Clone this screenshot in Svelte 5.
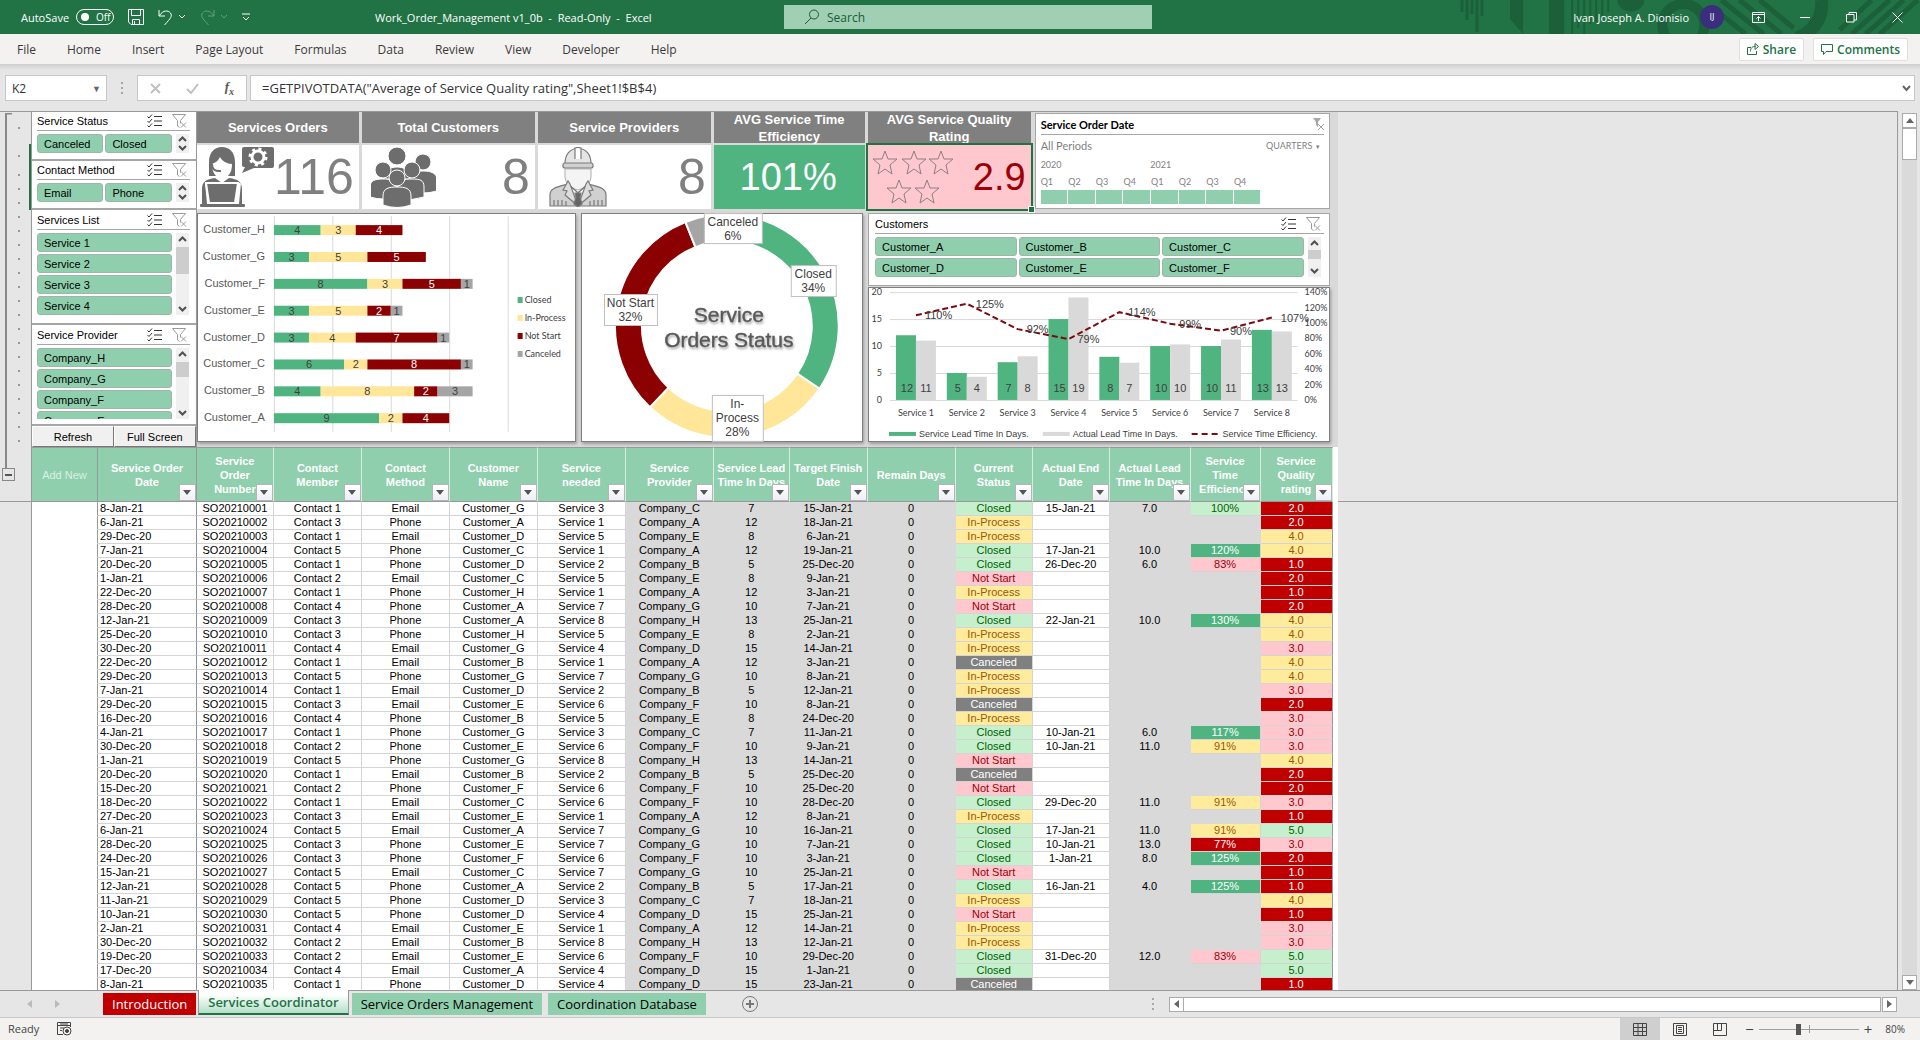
<script lang="ts">
	type Row = {
		id: string;
		date: string;
		contact: string;
		method: string;
		customer: string;
		service: string;
		provider: string;
		lead: number;
		target: string;
		status: string;
		end: string;
		actual: string;
		eff: string;
		rating: string;
	};

	const menus = ['File', 'Home', 'Insert', 'Page Layout', 'Formulas', 'Data', 'Review', 'View', 'Developer', 'Help'];

	let searchText = $state('');
	let cellRef = $state('K2');
	let formula = $state('=GETPIVOTDATA("Average of Service Quality rating",Sheet1!$B$4)');
	let autoSave = $state(false);
	let zoom = $state(80);

	const slicers = [
		{ title: 'Service Status', cls: 'two', items: ['Canceled', 'Closed'], thumb: 0 },
		{ title: 'Contact Method', cls: 'two', items: ['Email', 'Phone'], thumb: 0 },
		{ title: 'Services List', cls: 'list', items: ['Service 1', 'Service 2', 'Service 3', 'Service 4'], thumb: 27 },
		{ title: 'Service Provider', cls: 'cut', items: ['Company_H', 'Company_G', 'Company_F', 'Company_E'], thumb: 15 }
	];
	const customerSlicer = ['A', 'B', 'C', 'D', 'E', 'F'].map((c) => 'Customer_' + c);
	const quarters = ['Q1', 'Q2', 'Q3', 'Q4', 'Q1', 'Q2', 'Q3', 'Q4'];

	// Stacked bars: closed, in-process, not start, canceled
	const GREEN = '#50b480';
	const statusColors = [GREEN, '#ffe699', '#8b0000', '#a5a5a5'];
	const statusNames = ['Closed', 'In-Process', 'Not Start', 'Canceled'];
	const byCustomer: [string, number[]][] = [
		['H', [4, 3, 4, 0]],
		['G', [3, 5, 5, 0]],
		['F', [8, 3, 5, 1]],
		['E', [3, 5, 2, 1]],
		['D', [3, 4, 7, 1]],
		['C', [6, 2, 8, 1]],
		['B', [4, 8, 2, 3]],
		['A', [9, 2, 4, 0]]
	];
	const UNIT = 11.7;
	const bars = byCustomer.map(([name, vals], i) => {
		let x = 76;
		const segs = vals.map((v, k) => {
			const seg = { v, k, x, w: v * UNIT };
			x += seg.w;
			return seg;
		});
		return { name: 'Customer_' + name, y: 16 + i * 26.9, segs: segs.filter((s) => s.v > 0) };
	});

	// Donut
	const cx = 145;
	const cy = 112;
	const totals = [0, 1, 2, 3].map((k) => byCustomer.reduce((n, [, v]) => n + v[k], 0));
	const sum = totals.reduce((a, b) => a + b, 0);
	const pt = (r: number, a: number) => `${cx + r * Math.sin(a)} ${cy - r * Math.cos(a)}`;
	let angle = 0;
	const arcs = totals.map((n, k) => {
		const a = angle;
		const b = a + (n / sum) * Math.PI * 2;
		angle = b;
		const big = b - a > Math.PI ? 1 : 0;
		return {
			color: statusColors[k],
			d: `M${pt(112, a)}A112 112 0 ${big} 1 ${pt(112, b)}L${pt(85, b)}A85 85 0 ${big} 0 ${pt(85, a)}Z`
		};
	});
	const callouts = [
		{ x: 122, y: -1, w: 58, h: 30, lines: ['Canceled', '6%'] },
		{ x: 209, y: 51, w: 45, h: 31, lines: ['Closed', '34%'] },
		{ x: 22, y: 80, w: 53, h: 31, lines: ['Not Start', '32%'] },
		{ x: 130, y: 181, w: 51, h: 46, lines: ['In-', 'Process', '28%'] }
	];

	// Lead times: planned, actual, efficiency
	const lead = [
		{ plan: 12, actual: 11, eff: 110 },
		{ plan: 5, actual: 4.3, eff: 125 },
		{ plan: 7, actual: 8.1, eff: 92 },
		{ plan: 15, actual: 19, eff: 79 },
		{ plan: 8, actual: 6.9, eff: 114 },
		{ plan: 10, actual: 10.3, eff: 99 },
		{ plan: 10, actual: 11.2, eff: 90 },
		{ plan: 13, actual: 12.7, eff: 107 }
	].map((d, i) => ({ ...d, x: 27 + i * 50.9, y: 112 - d.eff * 0.771 }));
	const effLine = lead.map((d) => `${d.x + 20},${d.y}`).join(' ');

	const columns: [string, number][] = [
		['Add New', 66],
		['Service Order Date', 99],
		['Service Order Number', 77],
		['Contact Member', 88],
		['Contact Method', 88],
		['Customer Name', 88],
		['Service needed', 88],
		['Service Provider', 88],
		['Service Lead Time In Days', 76],
		['Target Finish Date', 78],
		['Remain Days', 88],
		['Current Status', 77],
		['Actual End Date', 77],
		['Actual Lead Time In Days', 81],
		['Service Time Efficiency', 70],
		['Service Quality rating', 72]
	];
	const totalWidth = columns.reduce((n, [, w]) => n + w, 0);

	// Every service has one provider and a fixed lead time
	const providers: [string, number][] = [
		['A', 12],
		['B', 5],
		['C', 7],
		['D', 15],
		['E', 8],
		['F', 10],
		['G', 10],
		['H', 13]
	];
	const names: Record<string, string> = { c: 'Closed', i: 'In-Process', n: 'Not Start', x: 'Canceled' };
	// date, contact, method, customer, service, target, status, rating, [end, actual, efficiency]
	const source = `8-Jan-21 1 E G 3 15-Jan-21 c 2 15-Jan-21 7.0 100%
6-Jan-21 3 P A 1 18-Jan-21 i 2
29-Dec-20 1 E D 5 6-Jan-21 i 4
7-Jan-21 5 P C 1 19-Jan-21 c 4 17-Jan-21 10.0 120%
20-Dec-20 1 P D 2 25-Dec-20 c 1 26-Dec-20 6.0 83%
1-Jan-21 2 E C 5 9-Jan-21 n 2
22-Dec-20 1 P H 1 3-Jan-21 i 1
28-Dec-20 4 P A 7 7-Jan-21 n 2
12-Jan-21 3 P A 8 25-Jan-21 c 4 22-Jan-21 10.0 130%
25-Dec-20 3 P H 5 2-Jan-21 i 4
30-Dec-20 4 E G 4 14-Jan-21 i 3
22-Dec-20 1 E B 1 3-Jan-21 x 4
29-Dec-20 5 P G 7 8-Jan-21 i 4
7-Jan-21 1 E D 2 12-Jan-21 i 3
29-Dec-20 3 E E 6 8-Jan-21 x 2
16-Dec-20 4 P B 5 24-Dec-20 i 3
4-Jan-21 1 P G 3 11-Jan-21 c 3 10-Jan-21 6.0 117%
30-Dec-20 2 P E 6 9-Jan-21 c 3 10-Jan-21 11.0 91%
1-Jan-21 5 P G 8 14-Jan-21 n 4
20-Dec-20 1 E B 2 25-Dec-20 x 2
15-Dec-20 2 P F 6 25-Dec-20 n 2
18-Dec-20 1 E C 6 28-Dec-20 c 3 29-Dec-20 11.0 91%
27-Dec-20 3 E E 1 8-Jan-21 i 1
6-Jan-21 5 E A 7 16-Jan-21 c 5 17-Jan-21 11.0 91%
28-Dec-20 3 P E 7 7-Jan-21 c 3 10-Jan-21 13.0 77%
24-Dec-20 3 P F 6 3-Jan-21 c 2 1-Jan-21 8.0 125%
15-Jan-21 5 E C 7 25-Jan-21 n 1
12-Jan-21 5 P A 2 17-Jan-21 c 1 16-Jan-21 4.0 125%
11-Jan-21 5 P D 3 18-Jan-21 i 4
10-Jan-21 5 P D 4 25-Jan-21 n 1
2-Jan-21 4 E E 1 14-Jan-21 i 3
30-Dec-20 2 E B 8 12-Jan-21 i 3
19-Dec-20 2 E E 6 29-Dec-20 c 5 31-Dec-20 12.0 83%
17-Dec-20 4 E A 4 1-Jan-21 c 5
8-Jan-21 1 P D 4 23-Jan-21 x 1`;

	const rows: Row[] = source.split('\n').map((line, i) => {
		const f = line.split(' ');
		const [prov, days] = providers[+f[4] - 1];
		return {
			id: 'SO' + (20210001 + i),
			date: f[0],
			contact: 'Contact ' + f[1],
			method: f[2] === 'E' ? 'Email' : 'Phone',
			customer: 'Customer_' + f[3],
			service: 'Service ' + f[4],
			provider: 'Company_' + prov,
			lead: days,
			target: f[5],
			status: names[f[6]],
			rating: f[7] + '.0',
			end: f[8] ?? '',
			actual: f[9] ?? '',
			eff: f[10] ?? ''
		};
	});

	const statusTone: Record<string, string> = {
		Closed: 'good',
		'In-Process': 'mid',
		'Not Start': 'bad',
		Canceled: 'off'
	};
	function effTone(eff: string) {
		if (!eff) return 'gray';
		const v = parseInt(eff);
		if (v > 100) return 'great';
		if (v === 100) return 'good';
		if (v >= 90) return 'mid';
		return v >= 80 ? 'bad' : 'worst';
	}
	const ratingTone = (r: string) => ['worst', 'worst', 'bad', 'mid', 'good'][parseInt(r) - 1];
</script>

{#snippet multi()}
	<svg width="15" height="14" viewBox="0 0 15 14" fill="none" stroke="#333">
		<path d="M.5 2.5L2 4 5 .5M.5 7L2 8.5 5 5M.5 11.5L2 13l3-3.5M7 2.5h8M7 7h8M7 11.5h8" />
	</svg>
{/snippet}

{#snippet clearFilter()}
	<svg width="15" height="14" viewBox="0 0 15 14" fill="none" stroke="#9a9a9a">
		<path d="M.5 .5h13l-5 6v3M.5 .5l5 6V12l2 1.5M9 8.5l5 5M14 8.5l-5 5" />
	</svg>
{/snippet}

{#snippet scroller(thumb: number)}
	<span class="scroller">
		<svg width="9" height="6" viewBox="0 0 9 6"><path d="M1 5l3.5-3.5L8 5" /></svg>
		{#if thumb}<i class="thumb" style="height: {thumb}px"></i>{/if}
		<svg class="down" width="9" height="6" viewBox="0 0 9 6"><path d="M1 1l3.5 3.5L8 1" /></svg>
	</span>
{/snippet}

<div class="app">
	<header class="titlebar">
		<svg class="decor" viewBox="0 0 460 34" preserveAspectRatio="xMaxYMid slice" fill="none" stroke="#1b6039" aria-hidden="true">
			<path d="M3 0v12M8 0v20M13 0v14M18 0v32M23 0v16" stroke-width="3" />
			<path d="M51 0v19l13 15V0zM90 0h15v34H90zM158 0a13 11 0 0 0 27 0z" fill="#1b6039" stroke="none" />
			<path d="M113 0v34M119 0v28M125 0v34M131 0v24M137 0v22M143 0v16M149 0v12" stroke-width="2" />
			<circle cx="224" cy="25" r="21" stroke-width="10" />
			<path d="M262 0l42 34M280 0l42 34M300 0l34 28M256 10l30 24" stroke-width="5" />
			<path d="M362 0q2 26-24 38" stroke-width="13" />
			<path d="M392 34L430 0M406 34L444 0M420 34L458 0M380 30L412 0" stroke-width="5" />
		</svg>
		<div class="quick">
			<span id="autosave">AutoSave</span>
			<button class="toggle" role="switch" aria-checked={autoSave} aria-labelledby="autosave" onclick={() => (autoSave = !autoSave)}>
				<i></i>{autoSave ? 'On' : 'Off'}
			</button>
			<button aria-label="Save">
				<svg width="16" height="16" viewBox="0 0 16 16"><path d="M.5 .5h15v15H3L.5 13zM3.5 .5v6h9v-6M4.5 15.5v-5h7v5M6.5 12v3.5" /></svg>
			</button>
			<button aria-label="Undo">
				<svg width="28" height="17" viewBox="0 0 28 17"><path d="M1 1v6h6M1.5 6.5C5 1 10 1 12.500 4c2 3 .5 5-6 12" /><path d="M21 6l3 3 3-3" /></svg>
			</button>
			<button class="redo" aria-label="Redo" disabled>
				<svg width="28" height="17" viewBox="0 0 28 17"><path d="M14 1v6H8M13.5 6.5C10 1 5 1 2.500 4c-2 3-.5 5 6 12" /><path d="M21 6l3 3 3-3" /></svg>
			</button>
			<button aria-label="Customize Quick Access Toolbar">
				<svg width="8" height="8" viewBox="0 0 8 8"><path d="M0 1h8M1 4l3 3 3-3" /></svg>
			</button>
		</div>
		<div class="doc">Work_Order_Management v1_0b&nbsp; -&nbsp; Read-Only&nbsp; -&nbsp; Excel</div>
		<label class="search">
			<svg width="16" height="16" viewBox="0 0 16 16"><circle cx="10" cy="5.5" r="4.5" /><path d="M7 9l-6 6" /></svg>
			<input type="text" placeholder="Search" aria-label="Search" bind:value={searchText} />
		</label>
		<div class="account">
			<span>Ivan Joseph A. Dionisio</span>
			<span class="avatar">IJ</span>
			<button aria-label="Ribbon Display Options">
				<svg width="13" height="11" viewBox="0 0 13 11"><path d="M.5 .5h12v10H.5zM.5 2.5h12M6.5 9V4.5M4.5 6.5l2-2 2 2" /></svg>
			</button>
			<button aria-label="Minimize"><svg width="11" height="11" viewBox="0 0 11 11"><path d="M0 5.5h10" /></svg></button>
			<button aria-label="Restore"><svg width="11" height="11" viewBox="0 0 11 11"><path d="M.5 2.5H8V10H.5zM3 2.5v-2h7.500V8H8" /></svg></button>
			<button aria-label="Close"><svg width="11" height="11" viewBox="0 0 11 11"><path d="M.5 .5l10 10M10.5 .5l-10 10" /></svg></button>
		</div>
	</header>

	<nav class="ribbon">
		{#each menus as m}<button>{m}</button>{/each}
		<div class="actions">
			<button>
				<svg width="12" height="12" viewBox="0 0 12 12"><path d="M4 4.5H.5v7h9V8M3.5 8.5c0-4 2-5 5-5M8 .5l3.5 3-3.5 3z" /></svg>Share
			</button>
			<button>
				<svg width="12" height="11" viewBox="0 0 12 11"><path d="M.5 .5h11v7H5l-2.500 3v-3h-2z" /></svg>Comments
			</button>
		</div>
	</nav>

	<div class="formula-bar">
		<div class="namebox">
			<input aria-label="Name Box" bind:value={cellRef} />
			<button aria-label="Named ranges">▼</button>
		</div>
		<i class="grip"></i>
		<div class="fx">
			<button aria-label="Cancel"><svg width="11" height="11" viewBox="0 0 11 11"><path d="M1 1l9 9M10 1l-9 9" /></svg></button>
			<button aria-label="Enter"><svg width="13" height="11" viewBox="0 0 13 11"><path d="M1 6l4 4L12 1" /></svg></button>
			<button class="fn" aria-label="Insert Function">f<sub>x</sub></button>
		</div>
		<div class="formula">
			<input aria-label="Formula" bind:value={formula} />
			<svg width="9" height="7" viewBox="0 0 9 7"><path d="M1 1l3.5 4L8 1" /></svg>
		</div>
	</div>

	<main class="workspace">
		<aside class="gutter">
			<div class="frozen">
				<div class="outline">
					<svg class="bracket" viewBox="0 0 8 356" preserveAspectRatio="none"><path d="M7 .5H1V356" /></svg>
					<button class="minus" aria-label="Collapse group"></button>
				</div>
				<div class="dots">
					<i></i><i class="wide"></i><i class="tall"></i>
					{#each Array(19) as _}<i></i>{/each}
				</div>
				<div class="rowmark"></div>
			</div>
		</aside>

		<section class="sheet">
			<div class="dash">
				<div class="slicers">
					{#each slicers as s}
						<section class="slicer {s.cls}">
							<h2>{s.title}<span>{@render multi()}{@render clearFilter()}</span></h2>
							<div class="body">
								<div class="chips">
									{#each s.items as item}<button class="chip">{item}</button>{/each}
								</div>
								{@render scroller(s.thumb)}
							</div>
						</section>
					{/each}
					<div class="macros"><button>Refresh</button><button>Full Screen</button></div>
				</div>

				<div class="board">
					<div class="kpis">
						<section class="kpi">
							<h2>Services Orders</h2>
							<div class="value">
								<svg width="74" height="61" viewBox="0 0 74 61" fill="#6d6d6d">
									<path d="M9 29V15C9 5 15 0 22 0s13 5 13 15v14h-7c3-3 4-7 4-12-5 0-10-3-12-7-2 4-5 6-8 7 0 5 1 9 4 12z" />
									<path d="M12 17q0 8 9 7" fill="none" stroke="#6d6d6d" stroke-width="2" />
									<path d="M2 57V42c0-7 4-10 13-11l7 5 7-5c9 1 13 4 13 11v15h-3l2-21H5l2 21z" />
									<path d="M6 36h32l-3 20H9z" stroke="#fff" stroke-width="2" />
									<rect x="0" y="57" width="45" height="3" rx="1" />
									<path d="M44 0h28q2 0 2 2v17q0 2-2 2H54l-12 5 3-6q-3 0-3-2V2q0-2 2-2z" />
									<circle cx="58" cy="10" r="6" fill="none" stroke="#fff" stroke-width="3" />
									<circle cx="58" cy="10" r="8" fill="none" stroke="#fff" stroke-width="3" stroke-dasharray="3 3.3" />
								</svg>
								<output>116</output>
							</div>
						</section>
						<section class="kpi">
							<h2>Total Customers</h2>
							<div class="value">
								<svg class="people" width="65" height="61" viewBox="0 0 65 61" fill="#6d6d6d" stroke="#fff">
									<circle cx="52" cy="15" r="8" /><path d="M38 44V33c0-7 6-9 14-9s14 2 14 9v11q-14 4-28 0z" />
									<circle cx="26" cy="9" r="9" /><path d="M13 32c0-8 5-12 13-12s13 4 13 12z" />
									<circle cx="12" cy="23" r="8" /><path d="M-1 50V40c0-7 6-8 13-8s13 1 13 8v10q-13 4-26 0z" />
									<circle cx="41" cy="23" r="8" /><path d="M27 52V40c0-7 6-8 14-8s12 1 12 8v10q-12 4-26 2z" />
									<circle cx="26" cy="31" r="8" /><path d="M12 58V49c0-8 6-9 14-9s14 1 14 9v9q-14 5-28 0z" />
								</svg>
								<output>8</output>
							</div>
						</section>
						<section class="kpi">
							<h2>Service Providers</h2>
							<div class="value">
								<svg class="engineer" width="58" height="60" viewBox="0 0 58 60" fill="#d0d0d0" stroke="#7a7a7a" stroke-width="1.2">
									<path d="M16 22h26v7c0 8-8 13-13 14-5-1-13-6-13-14z" fill="#f4f4f4" stroke="#bbb" />
									<path d="M16 17C16 7 21 2 29 1c8 1 13 6 13 16z" fill="#e4e4e4" />
									<path d="M26 12V1q3-1 6 0v11" fill="#fff" />
									<rect x="14" y="16" width="30" height="5" rx="2" />
									<path d="M1 59V48c0-7 7-8 18-11l10 9 10-9c11 3 18 4 18 11v11z" />
									<path d="M19 37l10 22 10-22-10 9z" fill="#fff" />
									<path d="M19 34l-5 9 4 1-2 4 13 11-8-22zM39 34l5 9-4 1 2 4-13 11 8-22z" fill="#ddd" />
									<path d="M26 46h6l-1 4 2 7-4 3-4-3 2-7z" fill="#666" />
									<path d="M5 53v6M9 53v6M13 53v6M17 54v5M41 54v5M45 53v6M49 53v6M53 53v6" />
								</svg>
								<output>8</output>
							</div>
						</section>
						<section class="kpi green">
							<h2>AVG Service Time Efficiency</h2>
							<div class="value"><output>101%</output></div>
						</section>
						<section class="kpi pink">
							<h2>AVG Service Quality Rating</h2>
							<div class="value">
								<svg class="stars" width="82" height="60" viewBox="0 0 82 60" fill="none" stroke="#8d7f83">
									{#each [[14, 16], [43, 16], [70, 16], [28, 45], [56, 45]] as [x, y]}
										<path d="M{x} {y - 12}l3 8h9l-7 6 2 9-7-5-7 5 2-9-7-6h9z" />
									{/each}
								</svg>
								<output>2.9</output>
							</div>
							<i class="handle"></i>
						</section>
						<section class="timeline">
							<h2>Service Order Date<svg width="11" height="13" viewBox="0 0 11 13"><path d="M0 0h8L5 4v5L3 7V4z" fill="#a6a6a6" /><path d="M5 6l6 6M11 6l-6 6" stroke="#a6a6a6" /></svg></h2>
							<div class="period"><span>All Periods</span><button>QUARTERS <small>▼</small></button></div>
							<div class="years"><span>2020</span><span>2021</span></div>
							<div class="quarters">
								{#each quarters as q}<button><span>{q}</span><i></i></button>{/each}
								<div></div>
							</div>
						</section>
					</div>

					<div class="charts">
						<div class="panel">
							<svg viewBox="0 0 378 227" role="img" aria-label="Orders by customer">
								{#each [0, 1, 2, 3, 4] as g}
									<path d="M{76.5 + g * 58.5} 2v216" stroke="#d9d9d9" />
								{/each}
								{#each bars as b}
									<text class="lbl" x="67" y={b.y + 3} text-anchor="end">{b.name}</text>
									{#each b.segs as s}
										<rect x={s.x} y={b.y - 5} width={s.w} height="10" fill={statusColors[s.k]} />
										<text class="num" class:light={s.k === 2} x={s.x + s.w / 2} y={b.y + 4} text-anchor="middle">{s.v}</text>
									{/each}
								{/each}
								{#each statusNames as n, k}
									<rect x="320" y={83 + k * 18} width="5" height="6" fill={statusColors[k]} />
									<text class="tiny" x="327" y={89 + k * 18}>{n}</text>
								{/each}
							</svg>
						</div>

						<div class="panel">
							<svg viewBox="0 0 280 227" role="img" aria-label="Service orders status">
								{#each arcs as a}<path d={a.d} fill={a.color} stroke="#fff" stroke-width="2" />{/each}
								<g class="donut-title">
									<text x={cx + 2} y="108" text-anchor="middle">Service</text>
									<text x={cx + 2} y="133" text-anchor="middle">Orders Status</text>
								</g>
								{#each callouts as c}
									<rect x={c.x + 0.5} y={c.y + 0.5} width={c.w} height={c.h} fill="#fff" stroke="#bfbfbf" />
									{#each c.lines as l, k}
										<text class="call" x={c.x + c.w / 2} y={c.y + 13 + k * 14} text-anchor="middle">{l}</text>
									{/each}
								{/each}
							</svg>
						</div>

						<div class="right">
							<section class="slicer customers">
								<h2>Customers<span>{@render multi()}{@render clearFilter()}</span></h2>
								<div class="body">
									<div class="chips">
										{#each customerSlicer as c}<button class="chip">{c}</button>{/each}
									</div>
									{@render scroller(9)}
								</div>
							</section>
							<div class="panel">
								<svg viewBox="0 0 460 153" role="img" aria-label="Lead time and efficiency">
									{#each [0, 5, 10, 15, 20] as v}
										<path d="M21 {112.5 - v * 5.4}h408" stroke="#d9d9d9" />
										<text class="axis" x="13" y={115 - v * 5.4} text-anchor="end">{v}</text>
									{/each}
									{#each [0, 20, 40, 60, 80, 100, 120, 140] as v}
										<text class="axis" x="436" y={115 - v * 0.771}>{v}%</text>
									{/each}
									{#each lead as d, i}
										<rect x={d.x} y={112 - d.plan * 5.4} width="20" height={d.plan * 5.4} fill={GREEN} />
										<rect x={d.x + 20} y={112 - d.actual * 5.4} width="20" height={d.actual * 5.4} fill="#d9d9d9" />
										<text class="num" x={d.x + 11} y="104" text-anchor="middle">{d.plan}</text>
										<text class="num" x={d.x + 30} y="104" text-anchor="middle">{Math.round(d.actual)}</text>
										<text class="axis" x={d.x + 20} y="128" text-anchor="middle">Service {i + 1}</text>
									{/each}
									<polyline points={effLine} fill="none" stroke="#7b0c14" stroke-width="2" stroke-dasharray="6 3" />
									{#each lead as d}
										<text class="num" x={d.x + 29} y={d.y + 4}>{d.eff}%</text>
									{/each}
									<rect x="20" y="144" width="27" height="4" fill={GREEN} />
									<text class="legend" x="50" y="149">Service Lead Time In Days.</text>
									<rect x="174" y="144" width="27" height="4" fill="#d9d9d9" />
									<text class="legend" x="204" y="149">Actual Lead Time In Days.</text>
									<path d="M323 146h27" stroke="#7b0c14" stroke-width="2" stroke-dasharray="6 4" />
									<text class="legend" x="354" y="149">Service Time Efficiency.</text>
								</svg>
							</div>
						</div>
					</div>
				</div>
			</div>

			<div class="grid">
				<table>
					<colgroup>
						{#each columns as [, w]}<col style="width: {(w / totalWidth) * 100}%" />{/each}
					</colgroup>
					<thead>
						<tr>
							{#each columns as [name], i}
								<th class:add={i === 0} class:narrow={i === 1 || i === 6}>
									{name}
									{#if i > 0}<button aria-label="Filter {name}"></button>{/if}
								</th>
							{/each}
						</tr>
					</thead>
					<tbody>
						{#each rows as r}
							<tr>
								<td class="blank"></td>
								<td class="date">{r.date}</td>
								<td>{r.id}</td>
								<td>{r.contact}</td>
								<td>{r.method}</td>
								<td>{r.customer}</td>
								<td>{r.service}</td>
								<td class="gray">{r.provider}</td>
								<td class="gray">{r.lead}</td>
								<td class="gray">{r.target}</td>
								<td class="gray">0</td>
								<td class={statusTone[r.status]}>{r.status}</td>
								<td>{r.end}</td>
								<td class="gray">{r.actual}</td>
								<td class={effTone(r.eff)}>{r.eff}</td>
								<td class="rating {ratingTone(r.rating)}">{r.rating}</td>
							</tr>
						{/each}
					</tbody>
				</table>
			</div>
		</section>

		<div class="beyond"><div class="frozen"></div></div>

		<div class="vscroll">
			<button aria-label="Scroll up"><svg width="8" height="5" viewBox="0 0 8 5"><path d="M0 5l4-5 4 5z" /></svg></button>
			<i></i>
			<button class="end" aria-label="Scroll down"><svg width="8" height="5" viewBox="0 0 8 5"><path d="M0 0l4 5 4-5z" /></svg></button>
		</div>
	</main>

	<footer class="tabs">
		<div class="arrows">
			<svg width="5" height="8" viewBox="0 0 5 8"><path d="M5 0L0 4l5 4z" /></svg>
			<svg width="5" height="8" viewBox="0 0 5 8"><path d="M0 0l5 4-5 4z" /></svg>
		</div>
		<button class="tab intro">Introduction</button>
		<button class="tab active">Services Coordinator</button>
		<button class="tab">Service Orders Management</button>
		<button class="tab">Coordination Database</button>
		<button class="plus" aria-label="New sheet">
			<svg width="16" height="16" viewBox="0 0 16 16"><circle cx="8" cy="8" r="7.5" /><path d="M8 4v8M4 8h8" stroke-width="2" /></svg>
		</button>
		<div class="hscroll">
			<i class="grip"></i>
			<button aria-label="Scroll left"><svg width="5" height="8" viewBox="0 0 5 8"><path d="M5 0L0 4l5 4z" /></svg></button>
			<div class="track"></div>
			<button aria-label="Scroll right"><svg width="5" height="8" viewBox="0 0 5 8"><path d="M0 0l5 4-5 4z" /></svg></button>
		</div>
	</footer>

	<div class="status">
		<span>Ready</span>
		<svg class="macro" width="15" height="14" viewBox="0 0 15 14"><path d="M6 12.5H.5V.5h13V5M.5 3.5h13M3 6h4M3 8.5h2M3 2h8" /><circle cx="10" cy="9" r="4" /><circle cx="10" cy="9" r="1.5" fill="#444" /></svg>
		<div class="views">
			<button class="on" aria-label="Normal"><svg width="14" height="13" viewBox="0 0 14 13"><path d="M.5 .5h13v12H.5zM.5 4.5h13M.5 8.5h13M5 .5v12M9.5 .5v12" /></svg></button>
			<button aria-label="Page Layout"><svg width="14" height="13" viewBox="0 0 14 13"><path d="M.5 .5h13v12H.5zM3.5 2.5h7v8h-7zM5 4.5h4M5 6.5h4M5 8.5h4" /></svg></button>
			<button aria-label="Page Break Preview"><svg width="14" height="13" viewBox="0 0 14 13"><path d="M.5 .5h13v12H.5zM.5 7.5h8v-7M4.5 .5v7" /></svg></button>
		</div>
		<div class="zoom">
			<button aria-label="Zoom out">−</button>
			<input type="range" min="10" max="190" bind:value={zoom} aria-label="Zoom" />
			<button aria-label="Zoom in">+</button>
			<span>{zoom}%</span>
		</div>
	</div>
</div>

<style>
	:global(body) {
		overflow: hidden;
	}
	.app {
		--ui: 'Open Sans', 'Noto Sans', sans-serif;
		display: flex;
		flex-direction: column;
		height: 100vh;
		background: #e6e6e6;
		font-family: 'Liberation Sans', Arial, sans-serif;
		font-size: 11px;
		color: #000;
	}
	button,
	input {
		font: inherit;
		color: inherit;
		background: none;
		border: 0;
		padding: 0;
		margin: 0;
		border-radius: 0;
	}
	input {
		min-width: 0;
		outline: 0;
	}
	svg {
		flex: none;
	}
	h2 {
		margin: 0;
		font-size: 11px;
		font-weight: 400;
	}

	/* title bar */
	.titlebar {
		position: relative;
		display: grid;
		grid-template-columns: 375fr 409fr 368fr 768fr;
		align-items: center;
		height: 34px;
		background: #217346;
		color: #fff;
		font-family: var(--ui);
		font-size: 11px;
	}
	.decor {
		position: absolute;
		right: 0;
		top: 0;
		width: 24%;
		height: 34px;
	}
	.quick {
		display: flex;
		align-items: center;
		padding-left: 21px;
		gap: 14px;
	}
	.quick svg,
	.account svg {
		display: block;
		fill: none;
		stroke: #fff;
	}
	.quick > span {
		margin-right: -7px;
	}
	.toggle {
		display: flex;
		align-items: center;
		gap: 7px;
		width: 38px;
		height: 16px;
		padding-left: 4px;
		border: 1px solid #fff;
		border-radius: 9px;
		font-size: 10px;
		box-sizing: border-box;
	}
	.toggle i {
		width: 8px;
		height: 8px;
		border-radius: 50%;
		background: #fff;
	}
	.redo {
		opacity: 0.3;
	}
	.search {
		position: relative;
		display: flex;
		align-items: center;
		gap: 7px;
		height: 24px;
		padding-left: 20px;
		background: #a0cfb4;
		font-size: 12px;
	}
	.search svg {
		fill: none;
		stroke: #185c37;
	}
	.search input {
		flex: 1;
		color: #185c37;
	}
	.search input::placeholder {
		color: #185c37;
		opacity: 1;
	}
	.account {
		position: relative;
		display: flex;
		justify-content: flex-end;
		align-items: center;
		padding-right: 17px;
		gap: 35px;
	}
	.account > span:first-child {
		margin-right: -24px;
	}
	.avatar {
		width: 24px;
		height: 24px;
		margin-right: -7px;
		border-radius: 50%;
		background: #3b2e7e;
		font-size: 9px;
		line-height: 24px;
		text-align: center;
	}

	/* ribbon */
	.ribbon {
		display: flex;
		align-items: center;
		gap: 31px;
		height: 30px;
		padding: 0 12px 0 17px;
		background: #f3f2f1;
		color: #3b3a39;
		font-family: var(--ui);
		font-size: 12px;
	}
	.actions {
		display: flex;
		gap: 9px;
		margin-left: auto;
	}
	.actions button {
		display: flex;
		align-items: center;
		gap: 4px;
		height: 23px;
		padding: 0 7px;
		border: 1px solid #e1dfdd;
		border-radius: 2px;
		background: #fff;
		color: #217346;
		font-weight: 600;
	}
	.actions svg {
		fill: none;
		stroke: #217346;
	}

	/* formula bar */
	.formula-bar {
		display: flex;
		height: 26px;
		padding: 11px 5px 10px;
		background: linear-gradient(#cfcfcf, #e6e6e6 6px);
		font-family: var(--ui);
		font-size: 12px;
		color: #333;
	}
	.namebox,
	.fx,
	.formula {
		display: flex;
		align-items: center;
		box-sizing: border-box;
		border: 1px solid #c6c6c6;
		background: #fff;
	}
	.namebox {
		width: 102px;
		padding: 0 5px 0 6px;
	}
	.namebox input {
		flex: 1;
	}
	.namebox button {
		font-size: 9px;
		color: #666;
	}
	.grip {
		width: 2px;
		margin: 7px 14px;
		background: repeating-linear-gradient(#a6a6a6 0 2px, transparent 2px 5px);
	}
	.fx {
		justify-content: space-between;
		width: 110px;
		padding: 0 12px;
		margin-right: 3px;
	}
	.fx svg {
		display: block;
		fill: none;
		stroke: #c0c0c0;
		stroke-width: 2;
	}
	.fn {
		font: italic 700 13px 'Liberation Serif', serif;
		color: #555;
	}
	.fn sub {
		font-size: 10px;
	}
	.formula {
		flex: 1;
		padding: 0 3px 0 11px;
		font-size: 13px;
	}
	.formula input {
		flex: 1;
	}
	.formula svg {
		fill: none;
		stroke: #666;
		stroke-width: 2;
	}

	/* workspace */
	.workspace {
		display: flex;
		flex: 1;
		min-height: 0;
		overflow: hidden;
	}
	.gutter {
		width: 31px;
		border-top: 1px solid #999;
	}
	.frozen {
		display: flex;
		height: 389px;
		border-bottom: 1px solid #999;
	}
	.outline {
		width: 17px;
		padding-top: 1px;
	}
	.bracket {
		display: block;
		width: 8px;
		height: 355px;
		margin-left: 5px;
		fill: none;
		stroke: #888;
		stroke-width: 2;
	}
	.minus {
		display: block;
		width: 13px;
		height: 13px;
		margin-left: 2px;
		border: 1px solid #888;
		background: linear-gradient(#555, #555) center / 7px 2px no-repeat;
	}
	.dots {
		display: flex;
		flex-direction: column;
		gap: 12px;
		width: 13px;
		padding: 15px 0 0 1px;
	}
	.dots i {
		width: 2px;
		height: 2px;
		background: #999;
	}
	.dots i.wide {
		margin-top: 14px;
	}
	.dots i.tall {
		margin-top: 5px;
	}
	.rowmark {
		width: 2px;
		height: 66px;
		margin: 32px 0 0 -2px;
		background: #217346;
	}
	.sheet {
		flex: 1307;
		min-width: 0;
		display: flex;
		flex-direction: column;
		border-left: 1px solid #999;
		border-top: 1px solid #999;
		background: #fff;
	}
	.beyond {
		flex: 560;
		border-right: 1px solid #999;
		border-top: 1px solid #999;
	}
	.vscroll {
		display: flex;
		flex-direction: column;
		width: 15px;
		margin: 2px 3px 0 4px;
		background: #dadada;
	}
	.vscroll button,
	.hscroll button {
		display: flex;
		align-items: center;
		justify-content: center;
		box-sizing: border-box;
		width: 15px;
		height: 15px;
		border: 1px solid #ababab;
		background: #fff;
	}
	.vscroll svg,
	.hscroll svg {
		fill: #666;
	}
	.vscroll i {
		height: 30px;
		border: 1px solid #ababab;
		background: #fff;
	}
	.vscroll .end {
		margin-top: auto;
	}

	/* slicers */
	.dash {
		display: flex;
		height: 335px;
		background: #d9d9d9;
	}
	.slicers {
		flex: 165;
		display: flex;
		flex-direction: column;
		border-right: 1px solid #999;
	}
	.slicer {
		box-sizing: border-box;
		padding: 0 6px 0 5px;
		background: #fff;
		border-bottom: 2px solid #a6a6a6;
	}
	.slicer.two {
		height: 49px;
	}
	.slicer.list {
		height: 115px;
	}
	.slicer.cut {
		height: 101px;
	}
	.slicer h2 {
		display: flex;
		justify-content: space-between;
		align-items: center;
		height: 18px;
		border-bottom: 1px solid #a6a6a6;
	}
	.slicer h2 span {
		display: flex;
		gap: 10px;
		margin-right: 3px;
	}
	.body {
		display: flex;
		gap: 4px;
		padding-top: 3px;
		padding-right: 1px;
	}
	.chips {
		flex: 1;
		display: grid;
		grid-template-columns: 1fr 1fr;
		grid-auto-rows: 19px;
		gap: 2px;
		overflow: hidden;
	}
	.list .chips {
		grid-template-columns: 1fr;
	}
	.list h2,
	.cut h2 {
		height: 19px;
	}
	.cut .chips {
		grid-template-columns: 1fr;
		height: 71px;
	}
	.chip {
		box-sizing: border-box;
		padding-left: 6px;
		border: 1px solid #9fb5a9;
		border-radius: 3px;
		background: #90cfae;
		text-align: left;
	}
	.scroller {
		display: flex;
		flex-direction: column;
		align-items: center;
		width: 13px;
		box-sizing: border-box;
		padding: 3px 0;
		background: #f0f0f0;
	}
	.two .scroller {
		padding: 2px 0;
	}
	.scroller svg {
		fill: none;
		stroke: #505050;
		stroke-width: 2;
	}
	.scroller .down {
		margin-top: auto;
	}
	.thumb {
		width: 13px;
		margin-top: 5px;
		background: #cdcdcd;
	}
	.macros {
		flex: 1;
		display: flex;
	}
	.macros button {
		flex: 1;
		border: 1px solid #fff;
		border-right-color: #777;
		border-bottom-color: #777;
		background: #f0f0f0;
	}

	/* KPI row */
	.board {
		flex: 1141;
		min-width: 0;
		display: flex;
		flex-direction: column;
		gap: 4px;
		padding: 0 8px 5px 0;
	}
	.kpis {
		display: grid;
		grid-template-columns: 162fr 173fr 173fr 151fr 163fr 296fr;
		gap: 3px;
		height: 97px;
	}
	.kpi {
		position: relative;
		display: flex;
		flex-direction: column;
		gap: 2px;
		min-width: 0;
	}
	.kpi h2 {
		display: flex;
		align-items: center;
		justify-content: center;
		height: 31px;
		padding: 0 16px;
		background: #808080;
		color: #fff;
		font-size: 13px;
		font-weight: 700;
		line-height: 17px;
		text-align: center;
	}
	.value {
		flex: 1;
		display: flex;
		align-items: center;
		justify-content: space-between;
		padding: 0 5px 0 3px;
		background: #fff;
		color: #808080;
		font-size: 50px;
		line-height: 64px;
		white-space: nowrap;
	}
	.value svg {
		margin-right: -6px;
	}
	.value .people {
		margin-left: 6px;
	}
	.value .engineer {
		margin-left: 8px;
	}
	.green .value {
		justify-content: center;
		background: #50b480;
		color: #fff;
		font-size: 38px;
	}
	.pink .value {
		background: #ffc7ce;
		color: #9c0006;
		font-size: 38px;
	}
	.pink::after {
		content: '';
		position: absolute;
		inset: 31px -2px -2px -2px;
		border: 2px solid #217346;
	}
	.handle {
		position: absolute;
		right: -4px;
		bottom: -4px;
		z-index: 1;
		width: 5px;
		height: 5px;
		border: 1px solid #fff;
		background: #217346;
	}
	.timeline {
		box-sizing: border-box;
		margin-left: 1px;
		margin-top: 1px;
		padding: 0 5px;
		border: 1px solid #a6a6a6;
		background: #fff;
		color: #7f7f7f;
		font-family: Lato, sans-serif;
	}
	.timeline h2 {
		display: flex;
		justify-content: space-between;
		align-items: center;
		height: 20px;
		border-bottom: 1px solid #a6a6a6;
		color: #000;
		font-weight: 700;
	}
	.period {
		display: flex;
		justify-content: space-between;
		align-items: center;
		height: 20px;
	}
	.period button {
		font-size: 9px;
		padding-right: 3px;
	}
	.period small {
		font-size: 6px;
	}
	.years {
		display: grid;
		grid-template-columns: 110fr 174fr;
		height: 18px;
		align-items: center;
		font-size: 9px;
	}
	.quarters {
		display: grid;
		grid-template-columns: repeat(8, 27fr) 63fr;
		column-gap: 1px;
		font-size: 9px;
	}
	.quarters button {
		display: block;
		text-align: left;
	}
	.quarters span {
		display: block;
		line-height: 17px;
	}
	.quarters i {
		display: block;
		height: 14px;
		background: #90cfae;
	}

	/* charts */
	.charts {
		flex: 1;
		min-height: 0;
		display: grid;
		grid-template-columns: 380fr 282fr 462fr;
		gap: 5px;
	}
	.panel {
		min-width: 0;
		border: 1px solid #7f7f7f;
		background: #fff;
		box-shadow: 1px 2px 3px #999;
	}
	.panel svg {
		display: block;
		width: 100%;
		height: 100%;
		overflow: visible;
	}
	.right {
		display: flex;
		flex-direction: column;
		gap: 1px;
		min-width: 0;
	}
	.right .panel {
		flex: 1;
		min-height: 0;
	}
	.customers {
		height: 73px;
		border: 1px solid #a6a6a6;
		padding: 0 5px 0 6px;
	}
	.customers h2 {
		height: 19px;
	}
	.customers .chips {
		grid-template-columns: 1fr 1fr 1fr;
	}
	.customers .body {
		padding-right: 3px;
	}
	.customers .thumb {
		margin-top: 4px;
	}
	.lbl {
		font-size: 11px;
		fill: #595959;
	}
	.num {
		font-size: 11px;
		fill: #404040;
	}
	.num.light {
		fill: #fff;
	}
	.tiny,
	.axis {
		font-family: Lato, sans-serif;
		font-size: 9px;
		fill: #404040;
	}
	.legend {
		font-size: 9px;
		fill: #404040;
	}
	.call {
		font-size: 12px;
		fill: #404040;
	}
	.donut-title {
		font-size: 21px;
		fill: #595959;
		stroke: #595959;
		stroke-width: 0.4px;
		filter: drop-shadow(1px 2px 1px #aaa);
	}

	/* table */
	.grid {
		flex: 1;
		min-height: 0;
		overflow: hidden;
		padding-right: 5px;
	}
	table {
		width: 100%;
		table-layout: fixed;
		border-collapse: separate;
		border-spacing: 0;
	}
	th {
		position: relative;
		box-sizing: border-box;
		height: 55px;
		padding: 0 2px;
		border-top: 1px solid #999;
		border-bottom: 1px solid #999;
		border-right: 1px solid #d6ece0;
		background: #90cfae;
		color: #fff;
		line-height: 14px;
		vertical-align: middle;
	}
	th:nth-child(-n + 2) {
		border-right-color: #999;
	}
	th.narrow {
		padding: 0 10px;
	}
	th.add {
		font-weight: 400;
		color: #d9f0e3;
	}
	th button {
		position: absolute;
		right: 0;
		bottom: 0;
		width: 17px;
		height: 17px;
		border: 1px solid #b5b5b5;
		background: linear-gradient(#fff, #eef0f6);
	}
	th button::after {
		content: '';
		display: block;
		width: 0;
		margin: 0 auto;
		border: 4px solid transparent;
		border-top: 5px solid #555;
		border-bottom: 0;
	}
	td {
		height: 13px;
		padding: 0;
		border-right: 1px solid #d4d4d4;
		border-bottom: 1px solid #d4d4d4;
		line-height: 13px;
		text-align: center;
		white-space: nowrap;
		overflow: hidden;
	}
	td.blank {
		border-bottom-color: transparent;
		border-right-color: #999;
	}
	td.date {
		padding-left: 2px;
		border-right-color: #8c8f9c;
		text-align: left;
	}
	td.gray {
		background: #d9d9d9;
		border-color: #d9d9d9;
	}
	td.good {
		background: #c6efce;
		color: #006100;
	}
	td.mid {
		background: #ffeb9c;
		color: #9c5700;
	}
	td.bad {
		background: #ffc7ce;
		color: #9c0006;
	}
	td.off {
		background: #808080;
		color: #fff;
	}
	td.great {
		background: #50b480;
		color: #fff;
	}
	td.worst {
		background: #c00000;
		color: #fff;
	}
	td.rating {
		border-right-color: #999;
	}

	/* sheet tabs */
	.tabs {
		display: flex;
		align-items: center;
		height: 26px;
		border-top: 1px solid #999;
		border-bottom: 1px solid #c6c6c6;
		font-family: var(--ui);
		font-size: 13px;
	}
	.arrows {
		display: flex;
		gap: 23px;
		width: 76px;
		padding-left: 27px;
		box-sizing: border-box;
		margin-right: 24px;
	}
	.arrows svg {
		fill: #bbb;
	}
	.tab {
		height: 22px;
		margin: 0 3px;
		padding: 0 9px;
		background: #90cfae;
		line-height: 20px;
	}
	.tab.intro {
		background: #c00000;
		color: #fff;
		margin-right: 2px;
	}
	.tab.active {
		align-self: flex-start;
		height: 25px;
		margin: -1px 0 0;
		border: 1px solid #999;
		border-top: 0;
		border-bottom: 2px solid #217346;
		background: linear-gradient(#fff 20%, #b4dfc8);
		color: #217346;
		font-weight: 600;
	}
	.plus {
		margin-left: 33px;
	}
	.plus svg {
		display: block;
		fill: none;
		stroke: #777;
	}
	.hscroll {
		display: flex;
		flex: 0 1 745px;
		height: 15px;
		margin: 0 23px 0 auto;
	}
	.hscroll .grip {
		margin: 1px 15px 1px 0;
	}
	.hscroll .track {
		flex: 1;
		margin: 0 1px 0 -1px;
		border: 1px solid #ababab;
		background: #fff;
	}

	/* status bar */
	.status {
		display: flex;
		align-items: center;
		height: 22px;
		padding: 0 15px 0 8px;
		background: #f3f2f1;
		color: #444;
		font-family: var(--ui);
		font-size: 11px;
		line-height: 20px;
	}
	.status svg {
		display: block;
		fill: none;
		stroke: #444;
	}
	.macro {
		margin-left: 18px;
	}
	.views {
		display: flex;
		align-self: stretch;
		margin-left: auto;
	}
	.views button {
		width: 40px;
		display: flex;
		align-items: center;
		justify-content: center;
	}
	.views .on {
		background: #cfcfcf;
	}
	.zoom {
		display: flex;
		align-items: center;
		gap: 5px;
		padding-left: 5px;
	}
	.zoom button {
		font-size: 15px;
		line-height: 20px;
	}
	.zoom span {
		font-size: 10px;
		margin-left: 8px;
	}
	.zoom input {
		appearance: none;
		width: 100px;
		height: 16px;
		background:
			linear-gradient(#999, #999) 50px center / 1px 8px no-repeat,
			linear-gradient(#a0a0a0, #a0a0a0) center / 100% 1px no-repeat;
	}
	.zoom input::-webkit-slider-thumb {
		appearance: none;
		width: 5px;
		height: 11px;
		background: #555;
	}
</style>
